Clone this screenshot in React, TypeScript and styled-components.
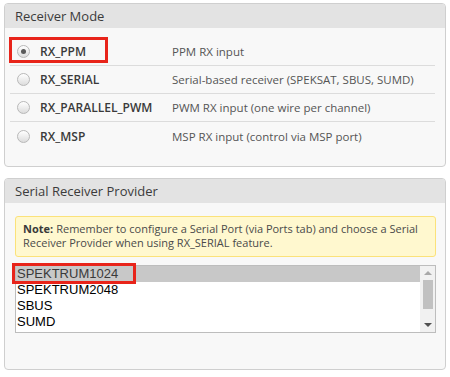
import React from "react";
import styled, { createGlobalStyle } from "styled-components";

const Global = createGlobalStyle`
  html, body { margin: 0; padding: 0; background: #ffffff; }
  body { font-family: "Open Sans", "Liberation Sans", sans-serif; }
`;

const Page = styled.div`
  width: 450px;
  padding: 3px 4px 0 4px;
  box-sizing: border-box;
  display: flex;
  flex-direction: column;
  gap: 11px;
`;

const Panel = styled.section<{ $h: number }>`
  height: ${(p) => p.$h}px;
  box-sizing: border-box;
  border: 1px solid #cfcfcf;
  border-radius: 4px;
  background: #f8f8f8;
  overflow: hidden;
  display: flex;
  flex-direction: column;
`;

const Header = styled.div`
  height: 24px;
  background: #e3e3e3;
  color: #3b3b3b;
  font-size: 13px;
  line-height: 24px;
  padding-left: 10px;
`;

const ModeBody = styled.div`
  padding: 10px 10px 0 5px;
`;

const Row = styled.div<{ $last?: boolean }>`
  position: relative;
  display: grid;
  grid-template-columns: 30px 132px 1fr;
  align-items: center;
  height: 28px;
  box-sizing: border-box;
  border-bottom: ${(p) => (p.$last ? "none" : "1px solid #dcdcdc")};
`;

const RadioCell = styled.div`
  padding-left: 7px;
  display: flex;
  align-items: center;
`;

const Radio = styled.span<{ $checked?: boolean }>`
  width: 13px;
  height: 13px;
  box-sizing: border-box;
  border-radius: 50%;
  border: 1px solid #b8b8b8;
  background: linear-gradient(#ffffff, #dcdcdc);
  display: flex;
  align-items: center;
  justify-content: center;
  &::after {
    content: "";
    display: ${(p) => (p.$checked ? "block" : "none")};
    width: 5px;
    height: 5px;
    border-radius: 50%;
    background: #5a5a5a;
  }
`;

const ModeLabel = styled.span`
  font-size: 12px;
  font-weight: 600;
  color: #3a3a3a;
`;

const ModeDesc = styled.span`
  font-size: 11.5px;
  color: #555555;
`;

const Marker = styled.div<{ $l: number; $t: number; $w: number; $h: number }>`
  position: absolute;
  left: ${(p) => p.$l}px;
  top: ${(p) => p.$t}px;
  width: ${(p) => p.$w}px;
  height: ${(p) => p.$h}px;
  box-sizing: border-box;
  border: 3px solid #e8241a;
  pointer-events: none;
`;

const ProviderBody = styled.div`
  padding: 13px 9px 0 10px;
  display: flex;
  flex-direction: column;
  gap: 8px;
`;

const Note = styled.div`
  box-sizing: border-box;
  height: 41px;
  background: #fff8cf;
  border: 1px solid #fbe27a;
  border-radius: 3px;
  padding: 5px 7px 4px 7px;
  font-size: 11px;
  line-height: 14px;
  color: #4a4a4a;
`;

const NoteLead = styled.b`
  font-weight: 700;
  color: #3a3a3a;
  margin-right: 3px;
`;

const ListBox = styled.div`
  position: relative;
  height: 68px;
  box-sizing: border-box;
  border: 1px solid #bdbdbd;
  background: #ffffff;
  display: flex;
`;

const Items = styled.div`
  flex: 1;
  display: flex;
  flex-direction: column;
`;

const Item = styled.div<{ $selected?: boolean }>`
  height: 16px;
  line-height: 16px;
  padding-left: 1px;
  font-family: "Liberation Sans", Arial, sans-serif;
  font-size: 13px;
  color: ${(p) => (p.$selected ? "#3a3a3a" : "#000000")};
  background: ${(p) => (p.$selected ? "#c8c8c8" : "transparent")};
`;

const ScrollBar = styled.div`
  width: 15px;
  background: #f1f1f1;
  display: flex;
  flex-direction: column;
  align-items: center;
`;

const Arrow = styled.div<{ $down?: boolean; $color: string }>`
  height: 14px;
  display: flex;
  align-items: center;
  justify-content: center;
  &::before {
    content: "";
    width: 0;
    height: 0;
    border-left: 4px solid transparent;
    border-right: 4px solid transparent;
    ${(p) =>
      p.$down
        ? `border-top: 4px solid ${p.$color};`
        : `border-bottom: 4px solid ${p.$color};`}
  }
`;

const Thumb = styled.div`
  width: 10px;
  height: 29px;
  background: #c1c1c1;
`;

const Spacer = styled.div`
  flex: 1;
`;

const modes = [
  { label: "RX_PPM", desc: "PPM RX input", checked: true },
  { label: "RX_SERIAL", desc: "Serial-based receiver (SPEKSAT, SBUS, SUMD)" },
  { label: "RX_PARALLEL_PWM", desc: "PWM RX input (one wire per channel)" },
  { label: "RX_MSP", desc: "MSP RX input (control via MSP port)" },
];

const providers = ["SPEKTRUM1024", "SPEKTRUM2048", "SBUS", "SUMD"];

export default function App() {
  return (
    <>
      <Global />
      <Page>
        <Panel $h={164}>
          <Header>Receiver Mode</Header>
          <ModeBody>
            {modes.map((m, i) => (
              <Row key={m.label} $last={i === modes.length - 1}>
                <RadioCell>
                  <Radio $checked={m.checked} />
                </RadioCell>
                <ModeLabel>{m.label}</ModeLabel>
                <ModeDesc>{m.desc}</ModeDesc>
                {m.checked && <Marker $l={-1} $t={-1} $w={99} $h={26} />}
              </Row>
            ))}
          </ModeBody>
        </Panel>
        <Panel $h={192}>
          <Header>Serial Receiver Provider</Header>
          <ProviderBody>
            <Note>
              <NoteLead>Note:</NoteLead>Remember to configure a Serial Port (via Ports tab) and choose a
              Serial Receiver Provider when using RX_SERIAL feature.
            </Note>
            <ListBox>
              <Items>
                {providers.map((p, i) => (
                  <Item key={p} $selected={i === 0}>
                    {p}
                  </Item>
                ))}
              </Items>
              <ScrollBar>
                <Arrow $color="#a8a8a8" />
                <Thumb />
                <Spacer />
                <Arrow $down $color="#505050" />
              </ScrollBar>
              <Marker $l={-4} $t={-3} $w={124} $h={21} />
            </ListBox>
          </ProviderBody>
        </Panel>
      </Page>
    </>
  );
}
